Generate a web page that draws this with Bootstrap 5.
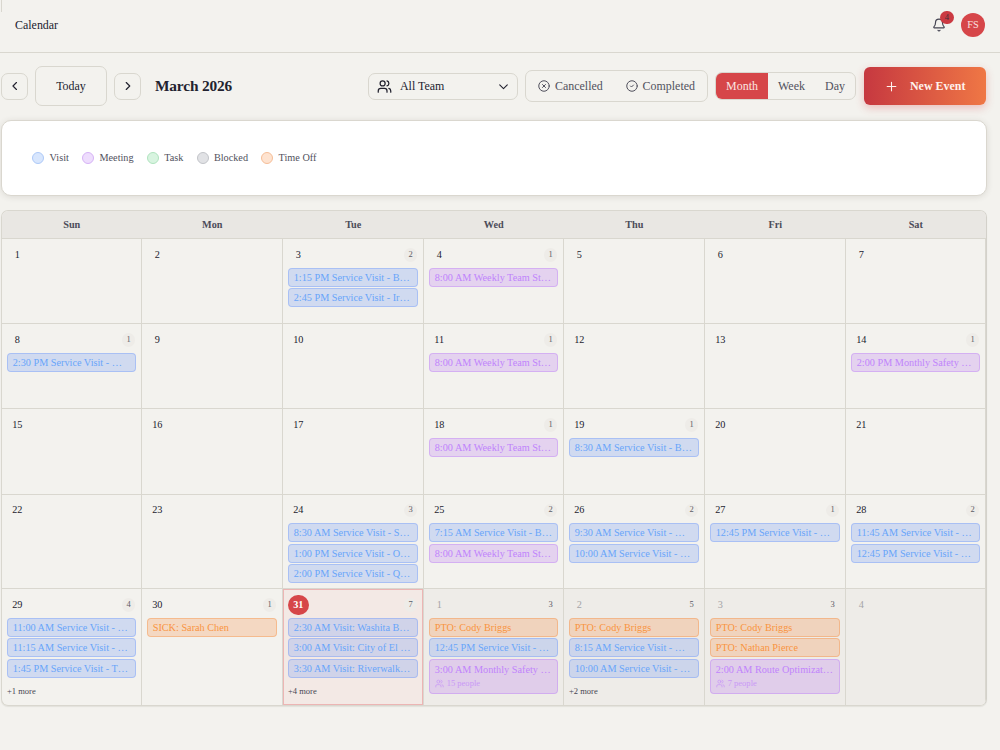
<!DOCTYPE html>
<html lang="en">
<head>
<meta charset="utf-8">
<meta name="viewport" content="width=device-width, initial-scale=1">
<title>Calendar</title>
<link href="https://cdn.jsdelivr.net/npm/bootstrap@5.3.0/dist/css/bootstrap.min.css" rel="stylesheet">
<style>
  :root { --line:#d9d7cf; --ink:#22222f; --soft:#51515d; --brand:#d64649; }
  body { background:#f3f2ee; color:var(--ink); font:11.95px/1.4 "Liberation Serif", serif; height:750px; overflow:hidden; }
  svg { fill:none; stroke:currentColor; stroke-width:2; stroke-linecap:round; stroke-linejoin:round; flex:none; display:block; }
  .topbar { height:53px; border-bottom:1px solid var(--line); padding:0 15px; position:relative; }
  .topbar::before { content:""; position:absolute; left:1px; top:0; width:1px; height:12px; background:var(--line); }
  .bell { position:relative; color:#454552; margin-right:15px; }
  .bell-count { position:absolute; left:8px; top:-7.5px; width:13.6px; height:13.6px; border-radius:50%; background:#cb3a42; color:#40303a; font-size:8.5px; line-height:13.6px; text-align:center; }
  .avatar { width:24px; height:24px; border-radius:50%; background:var(--brand); color:#fbe3e0; font-size:10.24px; }
  .toolbar { height:66px; padding:0 14px 0 1px; }
  .box { border:1px solid var(--line); border-radius:7px; background:transparent; color:inherit; font:inherit; padding:0; display:flex; align-items:center; }
  .sq { width:27px; height:27px; justify-content:center; }
  .today-btn { width:72px; height:40px; justify-content:center; }
  .month-title { font-size:15.36px; font-weight:700; letter-spacing:-.16px; margin:0; line-height:1; }
  .team { width:150px; height:27px; padding:0 7.5px 0 8px; }
  .status { width:183px; height:32px; color:var(--soft); padding:0 12px; }
  .views { width:141px; height:28px; overflow:hidden; color:var(--soft); }
  .views span { height:100%; display:flex; align-items:center; justify-content:center; }
  .views .on { background:var(--brand); color:#fbe5e2; }
  .new-event { width:122px; height:38.5px; border:0; border-radius:6px; color:#fff3ee; font:bold 11.95px "Liberation Serif", serif; background:linear-gradient(90deg,#c63840,#ef7745); box-shadow:0 3px 9px rgba(214,70,73,.3); padding:0 0 0 21px; margin-left:1px; }
  .legend-card { height:76px; margin:1px 13px 0 1px; background:#fff; border:1px solid #dad7cf; border-radius:10px; box-shadow:0 1px 6px rgba(60,50,30,.12); padding:1px 30px 0 30.4px; font-size:10.24px; color:var(--soft); gap:13.4px; }
  .legend-card span { gap:5.2px; }
  .dot { width:12px; height:12px; border-radius:50%; border:1px solid; }
  .dot.visit { background:#d8e6fd; border-color:#adc9f8; } .dot.meeting { background:#eeddfd; border-color:#d6b3f6; }
  .dot.task { background:#d8f4e0; border-color:#b0e3bf; } .dot.blocked { background:#e1e2e5; border-color:#c2c4c9; }
  .dot.off { background:#fee3d0; border-color:#f6be98; }
  .cal { width:986px; margin:14px 0 0 1px; border:1px solid var(--line); border-right-color:#d3d1ca; border-radius:7px; overflow:hidden; box-shadow:0 1px 1px rgba(60,50,30,.09); }
  .week { display:grid; grid-template-columns:140px 141px 141px 140px 141px 141px 140px; }
  .names { height:28px; background:#e9e7e3; border-bottom:1px solid var(--line); font-size:10.24px; font-weight:700; color:#4c4c59; }
  .names div { display:flex; align-items:center; justify-content:center; padding:1px .5px 0 0; }
  .day { border-right:1px solid var(--line); border-bottom:1px solid var(--line); padding:5.7px 5px 0; min-width:0; }
  .week:last-child .day { border-bottom:0; }
  .num { width:20.5px; height:20.5px; border-radius:50%; display:flex; align-items:center; justify-content:center; font-size:10.24px; }
  .cnt { width:13.6px; height:13.6px; border-radius:50%; display:flex; align-items:center; justify-content:center; font-size:8.53px; background:#eeece8; color:#5d5d67; margin-right:.6px; }
  .outside { background:#eeece8; } .outside .num { color:#a5a4a7; }
  .now { background:#f3e9e5; box-shadow:inset 0 0 0 1px #ecb5b4; } .now .num { background:var(--brand); color:#fff; font-weight:700; }
  .ev { height:18.8px; margin-bottom:1.67px; border:1px solid; border-radius:4px; padding:0 0 0 4.7px; font-size:10.24px; line-height:17px; white-space:nowrap; overflow:hidden; }
  .evs { padding-top:2.7px; }
  .ev.v { background:rgba(70,125,248,.2); border-color:rgba(80,130,255,.3); color:#68a5fa; }
  .ev.m { background:rgba(168,85,247,.2); border-color:rgba(168,85,247,.28); color:#c084fc; }
  .ev.o { background:rgba(249,115,22,.2); border-color:rgba(249,115,22,.3); color:#f99440; }
  .ev.tall { height:35px; padding-top:1.5px; }
  .ppl { font-size:8.53px; line-height:11px; opacity:.7; margin-top:-.3px; gap:3px; }
  .more { font-size:8.53px; line-height:12px; color:#474753; padding-top:5.4px; }
</style>
</head>
<body>
<header class="topbar d-flex align-items-center justify-content-between">
  <span style="margin-top:-2px">Calendar</span>
  <div class="d-flex align-items-center" style="margin-top:-2px">
    <div class="bell">
      <svg width="14" height="14" viewBox="0 0 24 24"><path d="M10.27 21a2 2 0 0 0 3.46 0"/><path d="M3.26 15.33A1 1 0 0 0 4 17h16a1 1 0 0 0 .74-1.67C19.41 13.96 18 12.5 18 8A6 6 0 0 0 6 8c0 4.5-1.41 5.96-2.74 7.33"/></svg>
      <span class="bell-count">4</span>
    </div>
    <div class="avatar d-flex align-items-center justify-content-center">FS</div>
  </div>
</header>

<div class="toolbar d-flex align-items-center justify-content-between">
  <div class="d-flex align-items-center" style="gap:7px">
    <button class="box sq" aria-label="Previous"><svg width="14" height="14" viewBox="0 0 24 24" stroke-width="2.5"><path d="m14.5 18-6-6 6-6"/></svg></button>
    <button class="box today-btn">Today</button>
    <button class="box sq" aria-label="Next"><svg width="14" height="14" viewBox="0 0 24 24" stroke-width="2.5"><path d="m9 18 6-6-6-6"/></svg></button>
    <h1 class="month-title" style="margin-left:7px">March 2026</h1>
  </div>
  <div class="d-flex align-items-center" style="gap:7px">
    <button class="box team">
      <svg width="15" height="15" viewBox="0 0 24 24"><path d="M16 21v-2a4 4 0 0 0-4-4H6a4 4 0 0 0-4 4v2"/><circle cx="9" cy="7" r="4"/><path d="M22 21v-2a4 4 0 0 0-3-3.87M16 3.13a4 4 0 0 1 0 7.75"/></svg>
      <span class="me-auto" style="margin-left:8px">All Team</span>
      <svg width="13" height="13" viewBox="0 0 24 24"><path d="m5 9 7 7 7-7"/></svg>
    </button>
    <div class="box status justify-content-between">
      <span class="d-flex align-items-center" style="gap:5px"><svg width="12" height="12" viewBox="0 0 24 24"><circle cx="12" cy="12" r="10.5"/><path d="m15 9-6 6m0-6 6 6"/></svg>Cancelled</span>
      <span class="d-flex align-items-center" style="gap:5px"><svg width="12" height="12" viewBox="0 0 24 24"><circle cx="12" cy="12" r="10.5"/><path d="m9 12 2 2 4-4"/></svg>Completed</span>
    </div>
    <div class="box views"><span class="on" style="width:52px">Month</span><span style="width:47px">Week</span><span style="width:40px">Day</span></div>
    <button class="new-event d-flex align-items-center"><svg width="13" height="13" viewBox="0 0 24 24"><path d="M4 12h16M12 4v16"/></svg><span style="margin-left:12px">New Event</span></button>
  </div>
</div>

<div class="legend-card d-flex align-items-center">
  <span class="d-flex align-items-center"><i class="dot visit"></i>Visit</span>
  <span class="d-flex align-items-center"><i class="dot meeting"></i>Meeting</span>
  <span class="d-flex align-items-center"><i class="dot task"></i>Task</span>
  <span class="d-flex align-items-center"><i class="dot blocked"></i>Blocked</span>
  <span class="d-flex align-items-center"><i class="dot off"></i>Time Off</span>
</div>

<main class="cal" id="cal">
  <div class="week names"><div>Sun</div><div>Mon</div><div>Tue</div><div>Wed</div><div>Thu</div><div>Fri</div><div>Sat</div></div>
</main>

<script>
// Each event: [type, label, attendees]; each day: [number, count, events, hidden count, state]
const standup = ['m', '8:00 AM Weekly Team St…'];
const weeks = [
  [85, [[1],[2],[3,2,[['v','1:15 PM Service Visit - B…'],['v','2:45 PM Service Visit - Ir…']]],[4,1,[standup]],[5],[6],[7]]],
  [85, [[8,1,[['v','2:30 PM Service Visit - …']]],[9],[10],[11,1,[standup]],[12],[13],[14,1,[['m','2:00 PM Monthly Safety …']]]]],
  [85.5, [[15],[16],[17],[18,1,[standup]],[19,1,[['v','8:30 AM Service Visit - B…']]],[20],[21]]],
  [94.5, [[22],[23],[24,3,[['v','8:30 AM Service Visit - S…'],['v','1:00 PM Service Visit - O…'],['v','2:00 PM Service Visit - Q…']]],
    [25,2,[['v','7:15 AM Service Visit - B…'],standup]],[26,2,[['v','9:30 AM Service Visit - …'],['v','10:00 AM Service Visit - …']]],
    [27,1,[['v','12:45 PM Service Visit - …']]],[28,2,[['v','11:45 AM Service Visit - …'],['v','12:45 PM Service Visit - …']]]]],
  [116, [[29,4,[['v','11:00 AM Service Visit - …'],['v','11:15 AM Service Visit - …'],['v','1:45 PM Service Visit - T…']],1],[30,1,[['o','SICK: Sarah Chen']]],
    [31,7,[['v','2:30 AM Visit: Washita B…'],['v','3:00 AM Visit: City of El …'],['v','3:30 AM Visit: Riverwalk…']],4,'now'],
    [1,3,[['o','PTO: Cody Briggs'],['v','12:45 PM Service Visit - …'],['m','3:00 AM Monthly Safety …',15]],0,'outside'],
    [2,5,[['o','PTO: Cody Briggs'],['v','8:15 AM Service Visit - …'],['v','10:00 AM Service Visit - …']],2,'outside'],
    [3,3,[['o','PTO: Cody Briggs'],['o','PTO: Nathan Pierce'],['m','2:00 AM Route Optimizat…',7]],0,'outside'],[4,0,[],0,'outside']]]
];
const people = '<svg width="9" height="9" viewBox="0 0 24 24"><path d="M16 21v-2a4 4 0 0 0-4-4H6a4 4 0 0 0-4 4v2"/><circle cx="9" cy="7" r="4"/><path d="M22 21v-2a4 4 0 0 0-3-3.87M16 3.13a4 4 0 0 1 0 7.75"/></svg>';
const event = ([type, label, n]) => `<div class="ev ${type} ${n ? 'tall' : ''}">${label}${n ? `<div class="ppl d-flex align-items-center">${people}${n} people</div>` : ''}</div>`;
const day = ([num, count, events = [], more, state = '']) => `<div class="day ${state}">
  <div class="d-flex align-items-center justify-content-between"><span class="num">${num}</span>${count ? `<span class="cnt">${count}</span>` : ''}</div>
  <div class="evs">${events.map(event).join('')}${more ? `<div class="more">+${more} more</div>` : ''}</div></div>`;
document.getElementById('cal').insertAdjacentHTML('beforeend',
  weeks.map(([h, days]) => `<div class="week" style="height:${h}px">${days.map(day).join('')}</div>`).join(''));
</script>
<script src="https://cdn.jsdelivr.net/npm/bootstrap@5.3.0/dist/js/bootstrap.bundle.min.js"></script>
</body>
</html>
